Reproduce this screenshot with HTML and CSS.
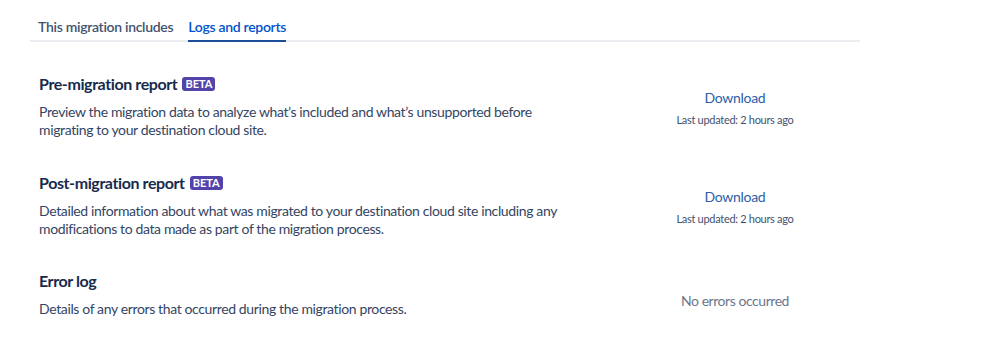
FILE: index.html
```html
<!DOCTYPE html>
<html>
<head>
    <title>Logs and reports</title>
    <link rel="stylesheet" href="styles.css">
</head>
<body>
    <div class="container">
        <div class="tabs">
            <div class="tab">This migration includes</div>
            <div class="tab active">Logs and reports</div>
        </div>

        <div class="report">
            <div class="report-info">
                <div class="report-title">Pre-migration report <span class="badge">BETA</span></div>
                <div class="report-desc">Preview the migration data to analyze what’s included and what’s unsupported before migrating to your destination cloud site.</div>
            </div>
            <div class="report-action">
                <a class="download" href="#">Download</a>
                <div class="updated">Last updated: 2 hours ago</div>
            </div>
        </div>

        <div class="report">
            <div class="report-info">
                <div class="report-title">Post-migration report <span class="badge">BETA</span></div>
                <div class="report-desc">Detailed information about what was migrated to your destination cloud site including any modifications to data made as part of the migration process.</div>
            </div>
            <div class="report-action">
                <a class="download" href="#">Download</a>
                <div class="updated">Last updated: 2 hours ago</div>
            </div>
        </div>

        <div class="report">
            <div class="report-info">
                <div class="report-title">Error log</div>
                <div class="report-desc">Details of any errors that occurred during the migration process.</div>
            </div>
            <div class="report-action">
                <div class="no-errors">No errors occurred</div>
            </div>
        </div>
    </div>
</body>
</html>
```

FILE: styles.css
```css
body {
    margin: 0;
    font-family: Lato, sans-serif;
    background-color: white;
    color: #172b4d;
}

.container {
    width: 830px;
    margin-left: 30px;
    padding-top: 17px;
}

.tabs {
    display: flex;
    gap: 15px;
    padding-left: 8px;
    border-bottom: 2px solid #ebecf0;
}

.tab {
    font-size: 14px;
    line-height: 20px;
    font-weight: 600;
    letter-spacing: -0.3px;
    color: #42526e;
    padding-bottom: 3px;
    margin-bottom: -2px;
}

.tab.active {
    color: #0052cc;
    border-bottom: 2px solid #1d4f99;
}

.report {
    display: grid;
    grid-template-columns: 571px 250px;
    padding-left: 9px;
    margin-top: 32px;
}

.report + .report {
    margin-top: 34px;
}

.report:last-child {
    margin-top: 33px;
}

.report-title {
    font-size: 16px;
    font-weight: 700;
    line-height: 20px;
    letter-spacing: -0.4px;
    display: flex;
    align-items: center;
    gap: 5px;
}

.badge {
    background-color: #5243aa;
    color: white;
    font-size: 11px;
    font-weight: 700;
    line-height: 14px;
    letter-spacing: 0;
    padding: 0 3px;
    border-radius: 3px;
}

.report-desc {
    font-size: 14px;
    color: #344563;
    line-height: 18px;
    letter-spacing: -0.37px;
    margin-top: 9px;
    max-width: 526px;
}

.report-action {
    text-align: center;
    padding-top: 13px;
}

.download {
    color: #2e5ea8;
    text-decoration: none;
    font-size: 14px;
    line-height: 20px;
    letter-spacing: -0.3px;
}

.updated {
    font-size: 11px;
    line-height: 16px;
    letter-spacing: -0.3px;
    color: #42526e;
    margin-top: 4px;
}

.no-errors {
    font-size: 14px;
    line-height: 20px;
    letter-spacing: -0.45px;
    color: #6b778c;
    padding-top: 7px;
}
```
